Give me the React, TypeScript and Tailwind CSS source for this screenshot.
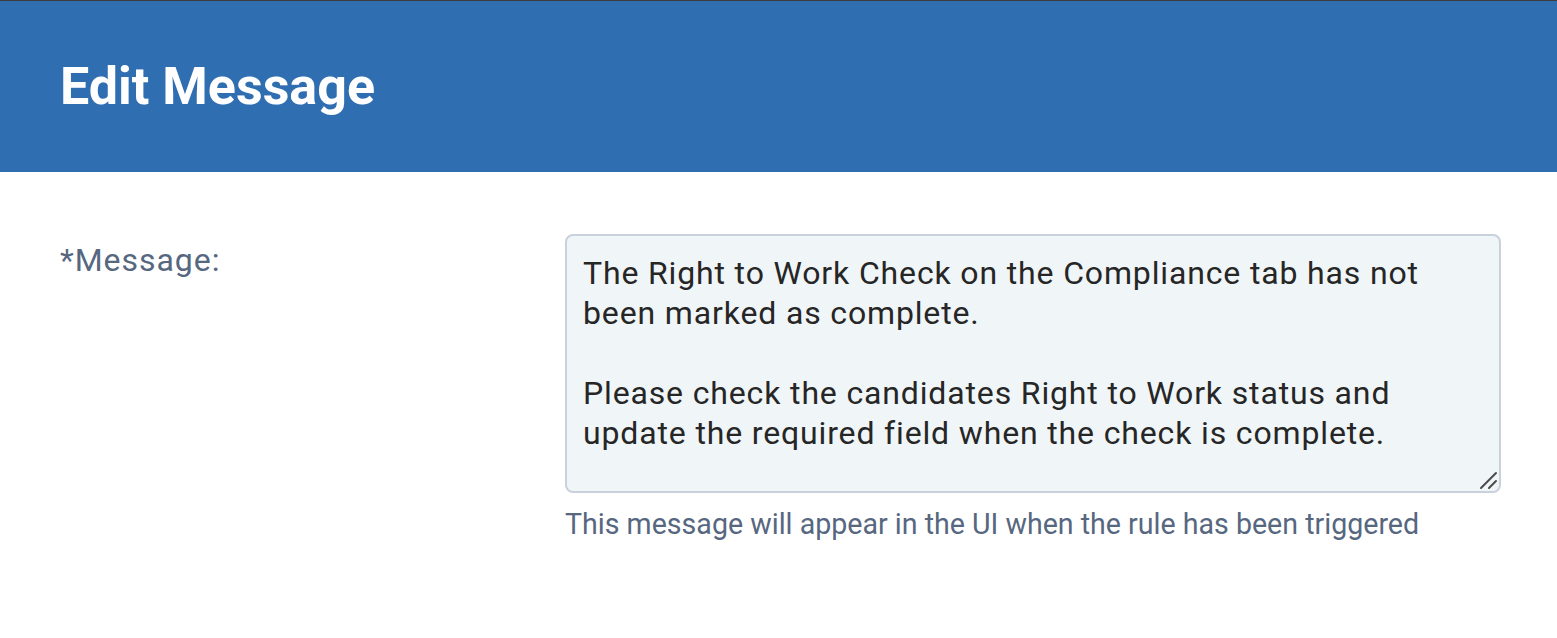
import React from "react";

export default function App() {
  const msg =
    "The Right to Work Check on the Compliance tab has not been marked as complete.\n\nPlease check the candidates Right to Work status and update the required field when the check is complete.";
  return (
    <div className="min-h-[638px] w-full bg-white" style={{ fontFamily: "Roboto, 'Liberation Sans', sans-serif" }}>
      <div className="h-[1px] bg-[#3c3c3c]" />
      <header className="flex h-[171px] items-center bg-[#2f6eb1] px-[60px]">
        <h1 className="text-[52px] font-bold leading-none text-white">Edit Message</h1>
      </header>
      <main className="flex pt-[62px] pr-[56px]">
        <label className="w-[565px] shrink-0 pl-[60px] pt-[6px] text-[32px] leading-[40px] tracking-[0.95px] text-[#56677f]">
          *Message:
        </label>
        <div className="flex flex-1 flex-col">
          <div className="relative">
            <textarea
              defaultValue={msg}
              className="block h-[259px] w-full resize-none rounded-[8px] border-2 border-[#c9d2dc] bg-[#f0f5f8] pl-[16px] pr-[18px] pt-[17px] text-[32px] leading-[40px] tracking-[0.85px] text-[#262626] outline-none"
              style={{ fontFamily: "Roboto, 'Liberation Sans', sans-serif" }}
            />
            <svg
              className="pointer-events-none absolute bottom-[3px] right-[3px]"
              width="20"
              height="20"
              viewBox="0 0 20 20"
            >
              <line x1="3" y1="18" x2="18" y2="3" stroke="#4a4a4a" strokeWidth="2" strokeLinecap="round" />
              <line x1="11" y1="18" x2="18" y2="11" stroke="#4a4a4a" strokeWidth="2" strokeLinecap="round" />
            </svg>
          </div>
          <p className="mt-[13px] text-[28.6px] leading-[36px] text-[#56677f]">
            This message will appear in the UI when the rule has been triggered
          </p>
        </div>
      </main>
    </div>
  );
}
